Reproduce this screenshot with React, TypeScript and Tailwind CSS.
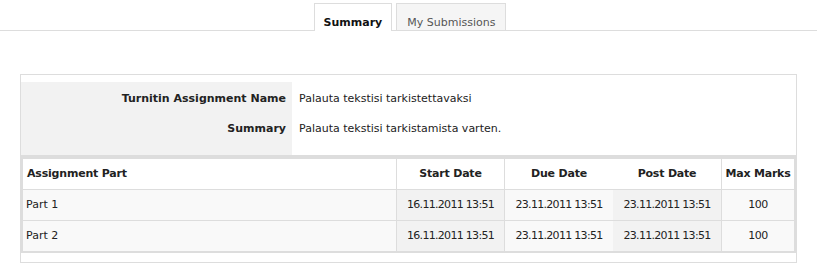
import React from 'react';

type PartRow = {
  name: string;
  start: string;
  due: string;
  post: string;
  marks: string;
};

const parts: PartRow[] = [
  { name: 'Part 1', start: '16.11.2011 13:51', due: '23.11.2011 13:51', post: '23.11.2011 13:51', marks: '100' },
  { name: 'Part 2', start: '16.11.2011 13:51', due: '23.11.2011 13:51', post: '23.11.2011 13:51', marks: '100' },
];

const Tabs = () => (
  <div className="flex justify-center gap-[4px] pl-[3px] pt-[3px] border-b border-[#dddddd]">
    <div className="h-[28px] -mb-px px-[9px] pt-[12px] leading-[13px] bg-white border-t border-x border-[#dddddd] font-bold text-[#111]">
      Summary
    </div>
    <div className="h-[28px] -mb-px px-[10px] pt-[12px] leading-[13px] bg-[#f5f5f5] border border-[#dddddd] text-[#555]">
      My Submissions
    </div>
  </div>
);

const SummaryInfo = () => (
  <div className="flex">
    <div className="w-[271px] bg-[#f2f2f2] pt-[2px] pb-[11px] pr-[6px] font-bold text-right">
      <div className="h-[30px] flex items-center justify-end pt-px">Turnitin Assignment Name</div>
      <div className="h-[30px] flex items-center justify-end pt-px">Summary</div>
    </div>
    <div className="flex-1 pt-[2px] pb-[11px] pl-[7px]">
      <div className="h-[30px] flex items-center pt-px">Palauta tekstisi tarkistettavaksi</div>
      <div className="h-[30px] flex items-center pt-px">Palauta tekstisi tarkistamista varten.</div>
    </div>
  </div>
);

const PartsTable = () => (
  <div className="border-t-[4px] border-x-2 border-b-2 border-[#dddddd]">
    <div className="grid grid-cols-[374px_108px_108px_109px_72px] h-[31px] border-b border-[#dddddd] font-bold tracking-[-0.2px]">
      <div className="flex items-center pl-[4px] border-r border-[#dddddd]">Assignment Part</div>
      <div className="flex items-center justify-center border-r border-[#dddddd]">Start Date</div>
      <div className="flex items-center justify-center">Due Date</div>
      <div className="flex items-center justify-center border-r border-[#dddddd]">Post Date</div>
      <div className="flex items-center justify-center">Max Marks</div>
    </div>
    {parts.map((p, i) => (
      <div
        key={p.name}
        className={
          i < parts.length - 1
            ? 'grid grid-cols-[374px_108px_108px_109px_72px] h-[31px] border-b border-[#dddddd]'
            : 'grid grid-cols-[374px_108px_108px_109px_72px] h-[30px]'
        }
      >
        <div className="flex items-center pl-[3px] bg-[#f9f9f9] border-r border-[#dddddd]">{p.name}</div>
        <div className="flex items-center justify-center bg-[#f2f2f2] border-r border-[#dddddd] tracking-[-0.7px]">{p.start}</div>
        <div className="flex items-center justify-center bg-[#f9f9f9] tracking-[-0.7px]">{p.due}</div>
        <div className="flex items-center justify-center bg-[#f2f2f2] border-r border-[#dddddd] tracking-[-0.7px]">{p.post}</div>
        <div className="flex items-center justify-center bg-[#f9f9f9] tracking-[-0.5px]">{p.marks}</div>
      </div>
    ))}
  </div>
);

const App = () => (
  <div className="w-[817px] h-[265px] bg-white font-['DejaVu_Sans',sans-serif] text-[11px] text-[#222]">
    <Tabs />
    <div className="mx-[20px] mt-[43px] border border-[#dddddd] pt-[7px] pb-[9px]">
      <SummaryInfo />
      <PartsTable />
    </div>
  </div>
);

export default App;
